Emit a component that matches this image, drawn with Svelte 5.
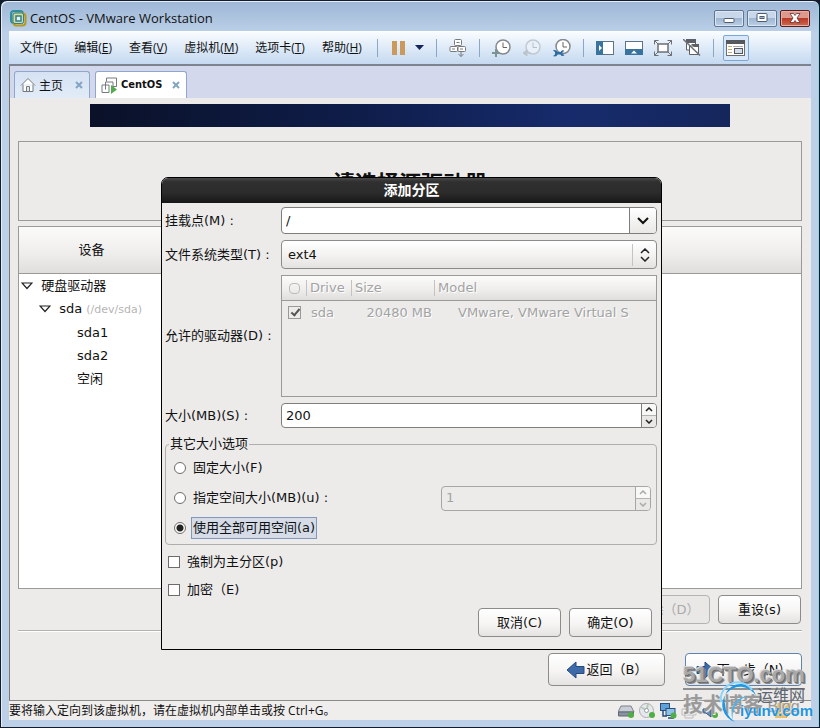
<script>
  const menus = [
    { name: '文件', key: 'F' },
    { name: '编辑', key: 'E' },
    { name: '查看', key: 'V' },
    { name: '虚拟机', key: 'M' },
    { name: '选项卡', key: 'T' },
    { name: '帮助', key: 'H' }
  ]

  const devices = [
    { name: '硬盘驱动器', level: 0, open: true },
    { name: 'sda', path: '(/dev/sda)', level: 1, open: true },
    { name: 'sda1', level: 2 },
    { name: 'sda2', level: 2 },
    { name: '空闲', level: 2 }
  ]

  let mountPoint = '/'
  let fsType = 'ext4'
  let size = '200'
  let maxSize = '1'
  let sizeOption = 'fill'
  let primary = false
  let encrypt = false

  function step(by) {
    size = String(Math.max(1, Number(size) + by))
  }
</script>

<div class="window">
  <header class="titlebar">
    <svg class="logo" width="17" height="17" viewBox="0 0 17 17">
      <rect x="1" y="1" width="12" height="12" rx="3" fill="none" stroke="#2f8f9d" stroke-width="2" />
      <rect x="3.500" y="3.500" width="12" height="12" rx="3" fill="none" stroke="#b79a1c" stroke-width="2" />
      <rect x="3" y="3" width="10.500" height="10.500" rx="2" fill="#d9dc96" stroke="#2c7f93" />
      <rect x="6" y="6" width="5" height="5" fill="#e8f0e8" stroke="#2c7f93" stroke-width="1.500" />
    </svg>
    <span class="title">CentOS - VMware Workstation</span>
    <button class="win" aria-label="最小化">
      <svg width="12" height="12" viewBox="0 0 12 12"><rect x="1" y="6.500" width="10" height="4" rx="1" fill="#fff" stroke="#4d5b70" /></svg>
    </button>
    <button class="win" aria-label="最大化">
      <svg width="12" height="12" viewBox="0 0 12 12"><rect x="1" y="1.500" width="10" height="8" rx="1" fill="#fff" stroke="#4d5b70" /><rect x="4" y="4.500" width="4" height="2" fill="#9fb4d0" stroke="#4d5b70" /></svg>
    </button>
    <button class="win close" aria-label="关闭">
      <svg width="12" height="12" viewBox="0 0 12 12"><path d="M1 1.500h3.500L6 3.500l1.500-2H11L8 6l3 4.500H7.500L6 8.500l-1.500 2H1L4 6z" fill="#fff" stroke="#5a3036" stroke-width=".8" /></svg>
    </button>
  </header>

  <div class="toolbar">
    <nav>
      {#each menus as menu}
        <button class="menu">{menu.name}(<u>{menu.key}</u>)</button>
      {/each}
    </nav>
    <i class="sep"></i>
    <button class="tool pause" aria-label="挂起">
      <svg width="14" height="14"><path d="M0 0h5v14H0zM8 0h5v14H8z" fill="#c99a5b" /></svg>
      <svg width="9" height="5"><path d="M0 0h9L4.500 5z" fill="#14245c" /></svg>
    </button>
    <i class="sep"></i>
    <button class="tool" aria-label="发送按键">
      <svg width="18" height="18" viewBox="0 0 18 18" fill="#fff" stroke="#77797c">
        <rect x="5.500" y=".5" width="7" height="6" rx="1" /><rect x="1" y="7.500" width="7.500" height="5" rx="1" /><rect x="9" y="7.500" width="7.500" height="5" rx="1" />
        <path d="M7.500 3.500h3M3 10h3M11 10h3M12 12.500v5M9.500 15l2.500 2.500 2.500-2.500" fill="none" />
      </svg>
    </button>
    <i class="sep"></i>
    <button class="tool" aria-label="拍摄快照">
      <svg width="19" height="18" viewBox="0 0 19 18">
        <circle cx="11" cy="8" r="7" fill="#fff" stroke="#85888c" stroke-width="1.500" />
        <path d="M11 3.500V8.500h4" fill="none" stroke="#666" />
        <path d="M0 14h8M4 10v8" stroke="#7b9494" stroke-width="2" />
      </svg>
    </button>
    <button class="tool" aria-label="恢复快照" disabled>
      <svg width="19" height="18" viewBox="0 0 19 18">
        <circle cx="11" cy="8" r="7" fill="#e8f0fa" stroke="#c2c8d0" stroke-width="1.500" />
        <path d="M11 3.500V8.500h4" fill="none" stroke="#b8bec6" />
        <path d="M9 14H4M5 11l-4 3 4 3z" fill="#bcc2ca" stroke="#bcc2ca" />
      </svg>
    </button>
    <button class="tool" aria-label="管理快照">
      <svg width="19" height="18" viewBox="0 0 19 18">
        <circle cx="11" cy="7.500" r="7" fill="#fff" stroke="#85888c" stroke-width="1.500" />
        <path d="M11 3V8h4" fill="none" stroke="#666" />
        <path d="M1 11.500c2-1 4 0 4.500 1.500h3c1-2 3-2 4-1l-2 1v2l2 1c-1 1.500-3 1.500-4-.5h-3C5 17.500 3 18 1 17l2-1.500v-2.500z" fill="#2f6ca3" />
      </svg>
    </button>
    <i class="sep"></i>
    <button class="tool" aria-label="库">
      <svg width="18" height="14"><rect x=".5" y=".5" width="17" height="13" fill="#fff" stroke="#5b7488" /><path d="M0 0h7v14H0z" fill="#39749f" /><path d="M3 4l3 3-3 3z" fill="#fff" /></svg>
    </button>
    <button class="tool" aria-label="缩略图栏">
      <svg width="18" height="14"><rect x=".5" y=".5" width="17" height="13" fill="#fff" stroke="#5b7488" /><path d="M0 8h18v6H0z" fill="#39749f" /><path d="M6 12.500l3-3 3 3z" fill="#fff" /></svg>
    </button>
    <button class="tool" aria-label="全屏">
      <svg width="18" height="16" viewBox="0 0 18 16" fill="none" stroke="#6c6f73"><rect x="4" y="4" width="10" height="8" fill="#fff" stroke-width="1.500" /><path d="M.5 4.500v-4h4M13.500.5h4v4M17.500 11.500v4h-4M4.500 15.500h-4v-4M.5.5L4 4M17.500.5L14 4M17.500 15.500L14 12M.5 15.500L4 12" /></svg>
    </button>
    <button class="tool" aria-label="Unity">
      <svg width="18" height="17" viewBox="0 0 18 17"><path d="M3.500 1h9v10h-9z" fill="#fff" stroke="#5d6064" /><path d="M3 0h10v4H3z" fill="#5d6064" /><path d="M6.500 7h9v8.500h-9z" fill="#fff" stroke="#5d6064" /><path d="M8 5h8v3h-5z" fill="#5d6064" /><path d="M0 0l17 16.500" stroke="#6d7074" stroke-width="1.500" /></svg>
    </button>
    <i class="sep"></i>
    <button class="tool active" aria-label="控制台视图">
      <svg width="19" height="16" viewBox="0 0 19 16"><rect x=".5" y=".5" width="18" height="15" fill="#fff" stroke="#6b6e72" /><path d="M0 0h19v4H0z" fill="#55585c" /><path d="M2 6.500h4M2 9.500h4M2 12.500h4" stroke="#c5a96e" /><path d="M7 6.500h10" stroke="#aaa" /><rect x="8.500" y="8.500" width="8" height="5" fill="#d2ddee" stroke="#55585c" /></svg>
    </button>
  </div>

  <div class="tabs">
    <div class="tab">
      <svg width="16" height="16" viewBox="0 0 16 16" fill="#fff" stroke="#77797c"><path d="M1 8.500L8 1.500l7 7M3 7.500v7h10v-7M6.500 14.500v-5h3v5" /></svg>
      <button>主页</button>
      <button class="x" aria-label="关闭主页"><svg width="8" height="8"><path d="M1 1l6 6M7 1L1 7" stroke="#83a5c4" stroke-width="2" /></svg></button>
    </div>
    <div class="tab current">
      <svg width="17" height="17" viewBox="0 0 17 17" fill="none" stroke="#77797c"><path d="M5.500 4.500V1h10v8.500h-5M4.500 12.500V5H12v7M1 15.500V8h7v7.500z" /><path d="M10 8l6 4.500L10 17z" fill="#52ac4e" stroke="none" /></svg>
      <button>CentOS</button>
      <button class="x" aria-label="关闭 CentOS"><svg width="8" height="8"><path d="M1 1l6 6M7 1L1 7" stroke="#83a5c4" stroke-width="2" /></svg></button>
    </div>
  </div>

  <main>
    <div class="banner"></div>
    <h1>请选择源驱动器</h1>
    <div class="tree">
      <table>
        <thead>
          <tr><th class="device">设备</th><th></th></tr>
        </thead>
        <tbody>
          {#each devices as d}
            <tr>
              <td colspan="2" class="level{d.level}">
                {#if d.open}
                  <svg width="12" height="8"><path d="M1 1h10L6 6.500z" fill="#fff" stroke="#222" stroke-width="1.200" /></svg>
                {/if}
                {d.name}
                {#if d.path}<small>{d.path}</small>{/if}
              </td>
            </tr>
          {/each}
        </tbody>
      </table>
    </div>
    <div class="actions">
      <button class="gtk" disabled>删除（D）</button>
      <button class="gtk">重设(s)</button>
    </div>
    <hr />
    <div class="wizard">
      <button class="gtk">
        <svg width="19" height="18" viewBox="0 0 19 18"><path d="M1 9l9-8v4.500h8v7h-8V17z" fill="#3e6ba8" stroke="#234a80" /></svg>返回（B）
      </button>
      <button class="gtk next">
        <svg width="19" height="18" viewBox="0 0 19 18"><path d="M18 9L9 1v4.500H1v7h8V17z" fill="#3e6ba8" stroke="#234a80" /></svg>下一步（N）
      </button>
    </div>

    <div class="dialog" role="dialog" aria-labelledby="dialog-title">
      <h2 id="dialog-title">添加分区</h2>
      <form on:submit|preventDefault>
        <div class="fields">
          <label for="mount">挂载点(M) :</label>
          <div class="entry combo">
            <input id="mount" bind:value={mountPoint} />
            <button type="button" aria-label="选择挂载点"><svg width="12" height="8"><path d="M1 1l5 5 5-5" fill="none" stroke="#111" stroke-width="2" /></svg></button>
          </div>

          <label for="fs">文件系统类型(T) :</label>
          <div class="select">
            <select id="fs" bind:value={fsType}>
              <option>ext4</option>
              <option>ext3</option>
              <option>swap</option>
            </select>
            <svg width="10" height="14" viewBox="0 0 10 14"><path d="M1 5l4-4 4 4M1 9l4 4 4-4" fill="none" stroke="#222" stroke-width="1.500" /></svg>
          </div>

          <span>允许的驱动器(D) :</span>
          <div class="drives">
            <table>
              <thead>
                <tr>
                  <th class="pick"><i class="ring"></i></th>
                  <th class="drive">Drive</th>
                  <th class="size">Size</th>
                  <th>Model</th>
                </tr>
              </thead>
              <tbody>
                <tr>
                  <td class="pick"><input type="checkbox" checked disabled aria-label="sda" /></td>
                  <td>sda</td>
                  <td class="size">20480 MB</td>
                  <td class="model">VMware, VMware Virtual S</td>
                </tr>
              </tbody>
            </table>
          </div>

          <label for="size">大小(MB)(S) :</label>
          <div class="entry spin">
            <input id="size" bind:value={size} />
            <div class="steps">
              <button type="button" aria-label="增加" on:click={() => step(1)}><svg width="8" height="5"><path d="M1 4l3-3 3 3" fill="none" stroke="#222" stroke-width="1.500" /></svg></button>
              <button type="button" aria-label="减少" on:click={() => step(-1)}><svg width="8" height="5"><path d="M1 1l3 3 3-3" fill="none" stroke="#222" stroke-width="1.500" /></svg></button>
            </div>
          </div>
        </div>

        <fieldset>
          <legend>其它大小选项</legend>
          <div class="option">
            <input type="radio" id="fixed" value="fixed" bind:group={sizeOption} />
            <label for="fixed">固定大小(F)</label>
          </div>
          <div class="option">
            <input type="radio" id="upto" value="upto" bind:group={sizeOption} />
            <label for="upto">指定空间大小(MB)(u) :</label>
            <div class="entry spin off">
              <input aria-label="最大空间 (MB)" bind:value={maxSize} disabled />
              <div class="steps">
                <button type="button" aria-label="增加" disabled><svg width="8" height="5"><path d="M1 4l3-3 3 3" fill="none" stroke="#aaa" stroke-width="1.500" /></svg></button>
                <button type="button" aria-label="减少" disabled><svg width="8" height="5"><path d="M1 1l3 3 3-3" fill="none" stroke="#aaa" stroke-width="1.500" /></svg></button>
              </div>
            </div>
          </div>
          <div class="option">
            <input type="radio" id="fill" value="fill" bind:group={sizeOption} />
            <label for="fill" class:focused={sizeOption === 'fill'}>使用全部可用空间(a)</label>
          </div>
        </fieldset>

        <div class="check">
          <input type="checkbox" id="primary" bind:checked={primary} />
          <label for="primary">強制为主分区(p)</label>
        </div>
        <div class="check">
          <input type="checkbox" id="encrypt" bind:checked={encrypt} />
          <label for="encrypt">加密（E)</label>
        </div>

        <div class="buttons">
          <button class="gtk" type="button">取消(C)</button>
          <button class="gtk" type="submit">确定(O)</button>
        </div>
      </form>
    </div>
  </main>

  <footer>
    <span class="hint">要将输入定向到该虚拟机，请在虚拟机内部单击或按 Ctrl+G。</span>
    <svg width="17" height="16" viewBox="0 0 17 16"><path d="M3 3h10l3 6H0z" fill="#c8cdd6" stroke="#7a818c" /><path d="M.5 9h15v4H.5z" fill="#8b93a1" stroke="#5f6774" /><circle cx="13" cy="12" r="3" fill="#4fae45" /></svg>
    <svg width="17" height="16" viewBox="0 0 17 16"><circle cx="7.500" cy="7.500" r="7" fill="#e6e8ec" stroke="#a9adb3" /><path d="M7.500 7.500L2 4M7.500 7.500L9 1" stroke="#b6cbb4" stroke-width="2" /><circle cx="7.500" cy="7.500" r="2" fill="#fff" stroke="#9a9ea5" /><circle cx="13" cy="12" r="3" fill="#4fae45" /></svg>
    <svg width="17" height="16" viewBox="0 0 17 16"><rect x=".5" y=".5" width="9" height="7" fill="#5fa0d6" stroke="#274d78" /><rect x="6" y="5.500" width="9" height="7" fill="#8cc2ea" stroke="#274d78" /><path d="M3 8v5h4M8 15h6" fill="none" stroke="#274d78" stroke-width="1.500" /><circle cx="13.500" cy="12.500" r="3" fill="#4fae45" /></svg>
    <svg width="17" height="16" viewBox="0 0 17 16" fill="#eee" stroke="#bbb"><path d="M4 1h8v5H4zM1 6h14v6H1zM4 10h8v5H4z" /></svg>
    <svg width="17" height="16" viewBox="0 0 17 16"><path d="M1 6h3l5-4v12l-5-4H1z" fill="#6d8fb5" stroke="#35557d" /><circle cx="13" cy="12" r="3" fill="#4fae45" /></svg>
    <svg class="note" width="16" height="15"><path d="M0 0h16v10l-5 5H0z" fill="#e6bf6a" /><path d="M11 15v-5h5z" fill="#b98e3c" /></svg>
  </footer>

  <div class="stamp" aria-hidden="true">
    <div class="cto">51CTO.com</div>
    <div class="blog">技术博客 <small>Blog</small></div>
    <div class="yun">
      <svg width="42" height="46" viewBox="0 0 42 46">
        <path d="M39 18A18 18 0 1 0 18 44A22 22 0 0 1 8 26A15 15 0 0 1 39 18z" fill="#1898e6" />
        <path d="M35 12A17 17 0 0 0 4 24" fill="none" stroke="#8fd4fa" stroke-width="2" />
        <path d="M16 42A17 17 0 0 1 32 18A20 20 0 0 0 16 42z" fill="#47b3ef" />
      </svg>
      <b class="net">运维网</b>
      <b class="site">iyunv.com</b>
    </div>
  </div>
</div>

<style>
  :global(body) {
    margin: 0;
    background: #101b2c;
  }
  .window {
    position: relative;
    display: flex;
    flex-direction: column;
    box-sizing: border-box;
    min-height: 100vh;
    padding: 0 8px 7px;
    border: 1px solid #141c2b;
    border-radius: 7px 7px 0 0;
    background: linear-gradient(#9db7d6, #bcd0e8 32px, #bcd0e8);
    box-shadow: inset 1px 1px 0 #e4edf8, inset -1px 0 0 #8fd8ea;
    color: #111;
    font-family: 'DejaVu Sans', 'Noto Sans CJK SC', sans-serif;
    font-size: 13px;
    line-height: 18px;
  }
  button,
  input,
  select {
    box-sizing: border-box;
    margin: 0;
    padding: 0;
    color: inherit;
    font: inherit;
  }
  button {
    border: 0;
    background: none;
  }
  svg {
    display: block;
    flex: none;
  }

  /* title bar */
  .titlebar {
    display: flex;
    align-items: center;
    gap: 3px;
    height: 30px;
    padding: 4px 1px 0 1px;
    box-sizing: border-box;
    font: 13px/18px 'Open Sans', sans-serif;
  }
  .title {
    flex: 1;
  }
  .win {
    display: flex;
    align-items: center;
    justify-content: center;
    width: 30px;
    height: 17px;
    border: 1px solid #5f7590;
    border-radius: 2px;
    background: linear-gradient(#c8d8ea 45%, #9fb6d2 50%, #bcd0e6);
    box-shadow: inset 0 0 0 1px #dbe7f4;
  }
  .close {
    border-color: #5c1c1c;
    background: linear-gradient(#dd9a8c 45%, #b93a27 50%, #d06a4f);
    box-shadow: inset 0 0 0 1px #e7b0a4;
  }

  /* menus and tool buttons */
  .toolbar {
    display: flex;
    align-items: center;
    height: 33px;
    padding-left: 11px;
    border-bottom: 2px solid #7e8390;
    background: linear-gradient(#fbfdff, #dce9f7 55%, #c5d9f0);
    font: 12px/18px 'Open Sans', 'Noto Sans CJK SC', sans-serif;
  }
  nav {
    display: flex;
    gap: 17px;
    margin-right: 3px;
  }
  .menu {
    white-space: nowrap;
  }
  .sep {
    width: 1px;
    height: 18px;
    margin: 0 12px;
    background: #8ba6c6;
  }
  .tool {
    display: flex;
    align-items: center;
    justify-content: center;
  }
  .tool + .tool {
    margin-left: 11px;
  }
  .pause {
    gap: 9px;
    margin-left: 2px;
  }
  .active {
    width: 26px;
    height: 26px;
    margin-left: -3px;
    border: 1px solid #7ba7d4;
    border-radius: 2px;
    background: #d9e8f8;
  }

  .tabs {
    display: flex;
    align-items: flex-end;
    gap: 5px;
    height: 32px;
    padding-left: 4px;
    border-left: 1px solid #777;
    background: #d3d8ec;
  }
  .tab {
    display: flex;
    align-items: center;
    gap: 3px;
    height: 27px;
    padding: 0 6px 0 5px;
    box-sizing: border-box;
    border: 1px solid #8fa6cd;
    border-bottom: 0;
    border-radius: 3px 3px 0 0;
    background: linear-gradient(#d6e2f3, #e2ecf8);
    font: 12px/18px 'Noto Sans CJK SC', sans-serif;
  }
  .current {
    background: #fff;
    font: bold 11px/18px 'DejaVu Sans Condensed', 'DejaVu Sans', sans-serif;
  }
  .x {
    margin-left: 9px;
  }
  .current .x {
    margin-left: 7px;
  }

  /* guest screen */
  main {
    position: relative;
    display: flex;
    flex: 1;
    flex-direction: column;
    padding: 6px 9px 14px 8px;
    border-left: 1px solid #777;
    background: #ecebea;
  }
  .banner {
    height: 23px;
    margin: 0 72px;
    background: linear-gradient(90deg, #0a1128, #0e1c48 40%, #172b6c 75%, #15265c);
  }
  h1 {
    height: 78px;
    margin: 14px 0 5px;
    border: 1px solid #9c9a97;
    font-size: 22px;
    line-height: 84px;
    text-align: center;
  }
  .tree {
    flex: 1;
    border: 1px solid #9c9a97;
    background: #fff;
  }
  table {
    width: 100%;
    border-collapse: collapse;
    table-layout: fixed;
  }
  th {
    font-weight: normal;
    background: linear-gradient(#fbfbfa, #eeedec 60%, #dfdedc);
    border-bottom: 1px solid #9c9a97;
  }
  td,
  th {
    padding: 0;
  }
  .tree th {
    height: 46px;
  }
  .device {
    width: 145px;
  }
  .tree td {
    height: 23px;
    line-height: 23px;
    white-space: nowrap;
  }
  .tree td svg {
    display: inline-block;
    margin-right: 4px;
  }
  .level0 {
    padding-left: 2px;
  }
  .level1 {
    padding-left: 20px;
  }
  .level2 {
    padding-left: 58px;
  }
  .tree small {
    color: #b5b5b5;
    font-size: 11px;
  }
  .gtk {
    display: flex;
    align-items: center;
    justify-content: center;
    width: 83px;
    height: 29px;
    border: 1px solid #8d8b88;
    border-radius: 4px;
    background: linear-gradient(#fff, #f6f5f4 55%, #e4e3e1);
    white-space: nowrap;
  }
  .gtk:disabled {
    border-color: #b5b3b0;
    background: #e9e8e6;
    color: #aaa;
  }
  .actions,
  .wizard,
  .buttons {
    display: flex;
    justify-content: flex-end;
    gap: 8px;
  }
  .actions {
    margin-top: 6px;
    padding-right: 1px;
  }
  hr {
    width: 100%;
    margin: 6px 0 21px;
    border: 0;
    border-top: 1px solid #b5b3b0;
    border-bottom: 1px solid #fff;
  }
  .wizard {
    gap: 20px;
  }
  .wizard .gtk {
    width: 117px;
    height: 33px;
    gap: 2px;
  }
  .wizard .next {
    border-color: #5f83b0;
  }

  .dialog {
    position: absolute;
    top: 79px;
    left: 151px;
    right: 149px;
    box-sizing: border-box;
    border: 1px solid #000;
    border-radius: 7px 7px 0 0;
    background: #ecebea;
  }
  h2 {
    height: 25px;
    margin: 0;
    border-radius: 6px 6px 0 0;
    background: linear-gradient(#4a4a4a, #303030 15%, #2b2b2b 60%, #171717);
    color: #fff;
    font-size: 14px;
    line-height: 25px;
    text-align: center;
  }
  form {
    padding: 4px 4px 12px 3px;
  }
  .fields {
    display: grid;
    grid-template-columns: 116px 1fr;
    align-items: center;
    row-gap: 6px;
    white-space: nowrap;
  }
  .entry {
    display: flex;
    box-sizing: border-box;
    height: 27px;
    border: 1px solid #807e7b;
    border-radius: 4px;
    background: #fff;
    overflow: hidden;
  }
  .entry input {
    flex: 1;
    min-width: 0;
    padding: 0 4px;
    border: 0;
    outline: 0;
    background: none;
  }
  .combo button {
    display: flex;
    align-items: center;
    justify-content: center;
    width: 27px;
    border-left: 1px solid #807e7b;
    background: linear-gradient(#fff, #e9e8e6);
  }
  .select {
    position: relative;
  }
  select {
    display: block;
    width: 100%;
    height: 29px;
    padding: 0 6px;
    border: 1px solid #8d8b88;
    border-radius: 4px;
    background: linear-gradient(#fff, #f4f3f2 50%, #e4e3e1);
    appearance: none;
  }
  .select svg {
    position: absolute;
    top: 4px;
    right: 0;
    padding: 4px 7px;
    border-left: 1px solid #c5c3c0;
  }
  .drives {
    height: 120px;
    border: 1px solid #9c9a97;
    color: #a3a3a3;
    text-shadow: 1px 1px 0 #fff;
  }
  .drives th {
    height: 24px;
    padding-left: 4px;
    text-align: left;
  }
  .drives td {
    height: 23px;
    padding-left: 5px;
  }
  .drives th + th {
    background: linear-gradient(#c5c3c0, #c5c3c0) 0 50% / 1px 16px no-repeat,
      linear-gradient(#fbfbfa, #eeedec 60%, #dfdedc);
  }
  .drives .pick {
    width: 24px;
    padding: 0;
  }
  .pick input {
    display: block;
    margin-left: 6px;
  }
  .ring {
    display: block;
    width: 9px;
    height: 9px;
    margin-left: 7px;
    border: 1px solid #bbb;
    border-radius: 4px;
  }
  .drives .drive {
    width: 41px;
  }
  .drives .size {
    width: 79px;
  }
  .drives td.size {
    padding-right: 2px;
    text-align: right;
  }
  .drives td.model {
    padding-left: 24px;
  }
  .spin {
    height: 25px;
  }
  .steps {
    display: flex;
    flex-direction: column;
    width: 14px;
    border-left: 1px solid #807e7b;
  }
  .steps button {
    display: flex;
    flex: 1;
    align-items: center;
    justify-content: center;
    background: #f8f8f7;
  }
  .steps button + button {
    border-top: 1px solid #b5b3b0;
    background: #e9e8e6;
  }

  fieldset {
    position: relative;
    display: flex;
    flex-direction: column;
    height: 91px;
    margin: 16px 0 0;
    padding: 8px 5px 0 8px;
    border: 1px solid #b0aeab;
    border-radius: 4px;
  }
  legend {
    position: absolute;
    top: -10px;
    left: 3px;
    padding: 0 1px;
    background: #ecebea;
  }
  .option,
  .check {
    display: flex;
    align-items: center;
    height: 30px;
  }
  .option label {
    padding: 0 1px;
    border: 1px solid transparent;
    line-height: 20px;
    white-space: nowrap;
  }
  .option .focused {
    border-color: #8298bb;
    background: #d5dce8;
  }
  .option .entry {
    width: 210px;
    margin-left: auto;
    border-color: #a8a6a3;
    background: #ecebea;
    color: #a3a3a3;
  }
  .off .steps {
    border-color: #a8a6a3;
  }
  input[type='radio'],
  input[type='checkbox'] {
    width: 12px;
    height: 12px;
    border: 1px solid #6e6c69;
    background: #fff;
    appearance: none;
  }
  input[type='radio'] {
    margin-right: 5px;
    border-radius: 50%;
  }
  input[type='radio']:checked {
    background: radial-gradient(#222 3px, #fff 4px);
  }
  .pick input[type='checkbox'] {
    width: 13px;
    height: 13px;
    border-color: #999;
    background: none;
  }
  .pick input:checked::after {
    content: '';
    display: block;
    width: 3px;
    height: 7px;
    margin: 0 0 0 4px;
    border: solid #555;
    border-width: 0 2px 2px 0;
    transform: rotate(40deg);
  }
  .check {
    height: 28px;
    padding-left: 3px;
    gap: 7px;
  }
  fieldset + .check {
    margin-top: 3px;
  }
  .buttons {
    margin-top: 4px;
    padding-right: 5px;
  }

  footer {
    display: flex;
    align-items: center;
    gap: 4px;
    height: 19px;
    padding-right: 20px;
    border-top: 1px solid #8a8a8a;
    background: #f0eeed;
    box-shadow: 0 -1px 0 #fff;
    font: 12px/18px 'Open Sans', 'Noto Sans CJK SC', sans-serif;
  }
  .hint {
    flex: 1;
  }
  .note {
    margin-left: 52px;
  }

  /* site stamps over the lower right corner */
  .stamp {
    position: absolute;
    right: 4px;
    bottom: 3px;
    width: 132px;
    height: 62px;
    pointer-events: none;
    white-space: nowrap;
  }
  .cto {
    width: 122px;
    border-bottom: 2px solid #8f8f8f;
    color: #a9a9a9;
    font: bold 22px/26px 'Liberation Sans', sans-serif;
    text-shadow: 1px 1px 0 #6f6f6f, 2px 2px 0 #8a8a8a, -1px -1px 0 #d5d5d5;
  }
  .blog {
    color: #9a9a9a;
    font: bold 20px/28px 'Noto Sans CJK SC', sans-serif;
    text-shadow: 1px 1px 0 #e8e8e8;
  }
  .blog small {
    font: 16px/20px 'Liberation Sans', sans-serif;
  }
  .yun svg {
    position: absolute;
    left: 34px;
    bottom: 0;
  }
  .net {
    position: absolute;
    right: 10px;
    bottom: 20px;
    color: #5d6670;
    font: 16px/20px 'Noto Sans CJK SC', sans-serif;
  }
  .site {
    position: absolute;
    right: 2px;
    bottom: 3px;
    color: #1e95e0;
    font: bold 15px/20px 'Liberation Sans', sans-serif;
    text-shadow: 0 0 1px #fff;
  }
</style>
